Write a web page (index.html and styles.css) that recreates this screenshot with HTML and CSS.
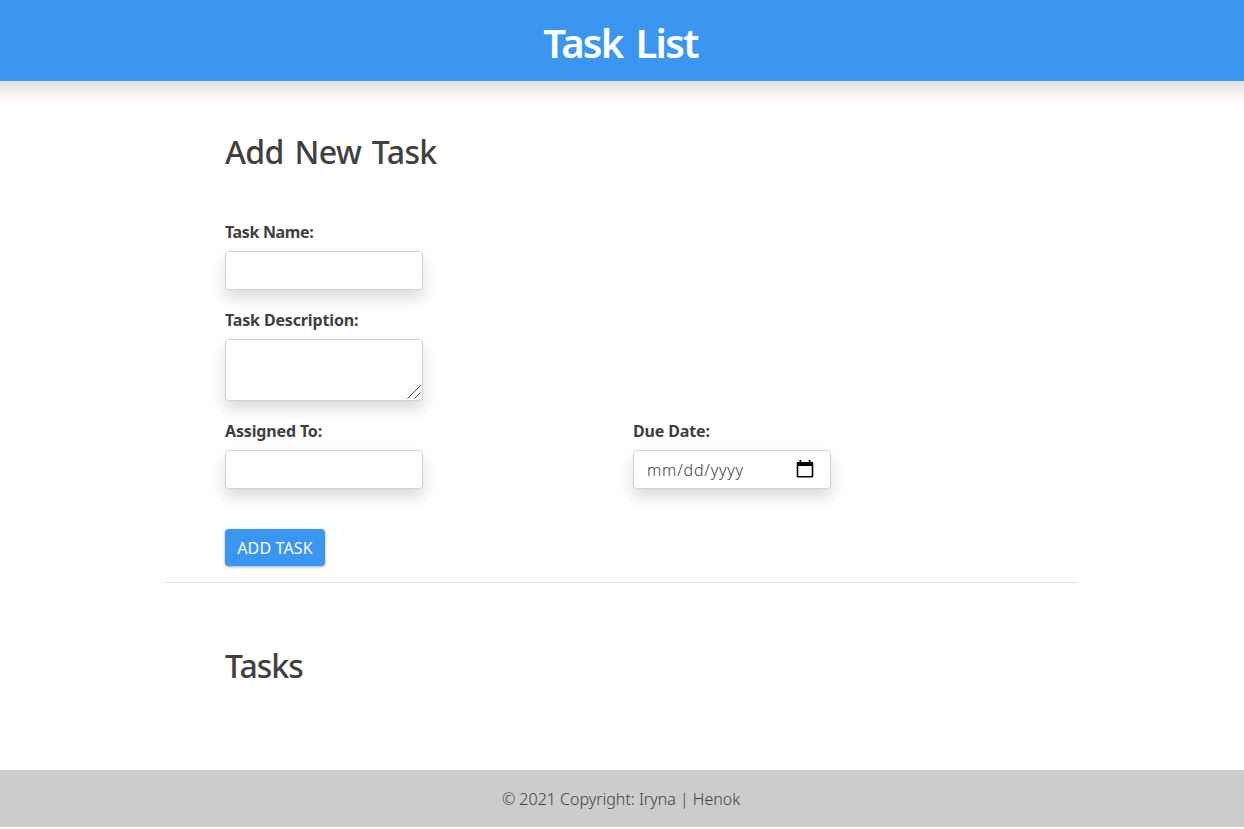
FILE: index.html
```html
<!DOCTYPE html>
<html lang="en">
<head>
<meta charset="utf-8">
<title>Task List</title>
<link rel="stylesheet" href="styles.css">
</head>
<body>
<header class="header"><h1 class="brand">Task List</h1></header>
<main class="container">
  <section class="form-section">
    <h2 class="heading">Add New Task</h2>
    <form class="form">
      <div class="field"><label class="label" for="name">Task Name:</label><input class="control" id="name" type="text"></div>
      <div class="field field-desc"><label class="label label-desc" for="desc">Task Description:</label>
        <div class="area-wrap"><textarea class="control area" id="desc"></textarea><svg class="grip" viewBox="0 0 14 14"><path d="M.5 13.500 13.500.5M7.500 13.500 13.500 7.500"/></svg></div></div>
      <div class="row">
        <div class="field"><label class="label label-desc" for="assign">Assigned To:</label><input class="control" id="assign" type="text"></div>
        <div class="field"><label class="label label-desc">Due Date:</label>
          <div class="control date"><span class="date-text">mm/dd/yyyy</span>
            <svg class="calendar" viewBox="0 0 18 18"><path fill-rule="evenodd" d="M3.500 0h1.700v2h7.600V0h1.700v2H16a1.300 1.300 0 0 1 1.300 1.300v12.900a1.300 1.300 0 0 1-1.300 1.300H2A1.300 1.300 0 0 1 .7 16.200V3.300A1.300 1.300 0 0 1 2 2h1.500zM2.300 6v9.900h13.400V6z"/></svg>
          </div>
        </div>
      </div>
      <button class="button" type="button">ADD TASK</button>
    </form>
  </section>
  <hr class="divider">
  <section class="tasks"><h2 class="heading heading-tasks">Tasks</h2></section>
</main>
<footer class="footer">© 2021 Copyright: Iryna | Henok</footer>
</body>
</html>
```
FILE: styles.css
```css
* { box-sizing: border-box; }
body { margin: 0; height: 829px; display: flex; flex-direction: column; overflow: hidden; background: #fff; color: #404040; font: 16px/24px "Noto Sans", "Open Sans", sans-serif; }
.header { height: 81px; flex: none; margin: 0 -24px; background: #3b96f2; box-shadow: 0 8px 16px rgba(0,0,0,.15); color: #fff; text-align: center; padding: 19px 3px 0 0; }
.brand { margin: 0; font-size: 40px; line-height: 48px; font-weight: 600; letter-spacing: -1.7px; word-spacing: 4px; }
.container { width: 915px; margin-left: 163px; flex: none; height: 689px; }
.form-section { padding: 51px 0 0 62px; height: 501px; }
.heading { margin: 0; font-size: 32px; line-height: 40px; font-weight: 500; letter-spacing: -.6px; word-spacing: 3px; }
.heading-tasks { letter-spacing: -1px; }
.form { padding-top: 48px; }
.field { width: 198px; height: 88px; }
.field-desc { height: 111px; }
.label { display: block; height: 31px; font-weight: 700; letter-spacing: -.35px; white-space: nowrap; }
.label-desc { letter-spacing: -.15px; }
.control { display: block; width: 198px; height: 39px; border: 1px solid #ced4da; border-radius: 4px; background: #fff; box-shadow: 0 8px 16px rgba(0,0,0,.15); padding: 6px 12px; font: inherit; }
.area-wrap { position: relative; width: 198px; }
.area { height: 62px; resize: none; }
.grip { position: absolute; right: 2px; bottom: 2px; width: 14px; height: 14px; fill: none; stroke: #444; stroke-width: 1; }
.row { display: flex; gap: 210px; height: 110px; }
.date { display: flex; justify-content: space-between; align-items: center; padding: 0 16px 2px 13px; }
.date-text { padding-top: 2px; font-weight: 350; letter-spacing: .8px; }
.calendar { width: 18px; height: 18px; }
.button { width: 100px; height: 37px; padding: 0; border: 0; border-radius: 4px; background: #3b96f2; color: #fff; font: 400 16px/24px "Noto Sans", sans-serif; letter-spacing: .15px; box-shadow: 0 1px 3px rgba(0,0,0,.35); }
.divider { margin: 0; border: 0; height: 1px; background: #e5e5e5; }
.tasks { padding: 63px 0 0 62px; }
.footer { height: 57px; flex: none; background: #ccc; text-align: center; padding: 17px 2px 0 0; font-weight: 350; letter-spacing: 0; }
```
